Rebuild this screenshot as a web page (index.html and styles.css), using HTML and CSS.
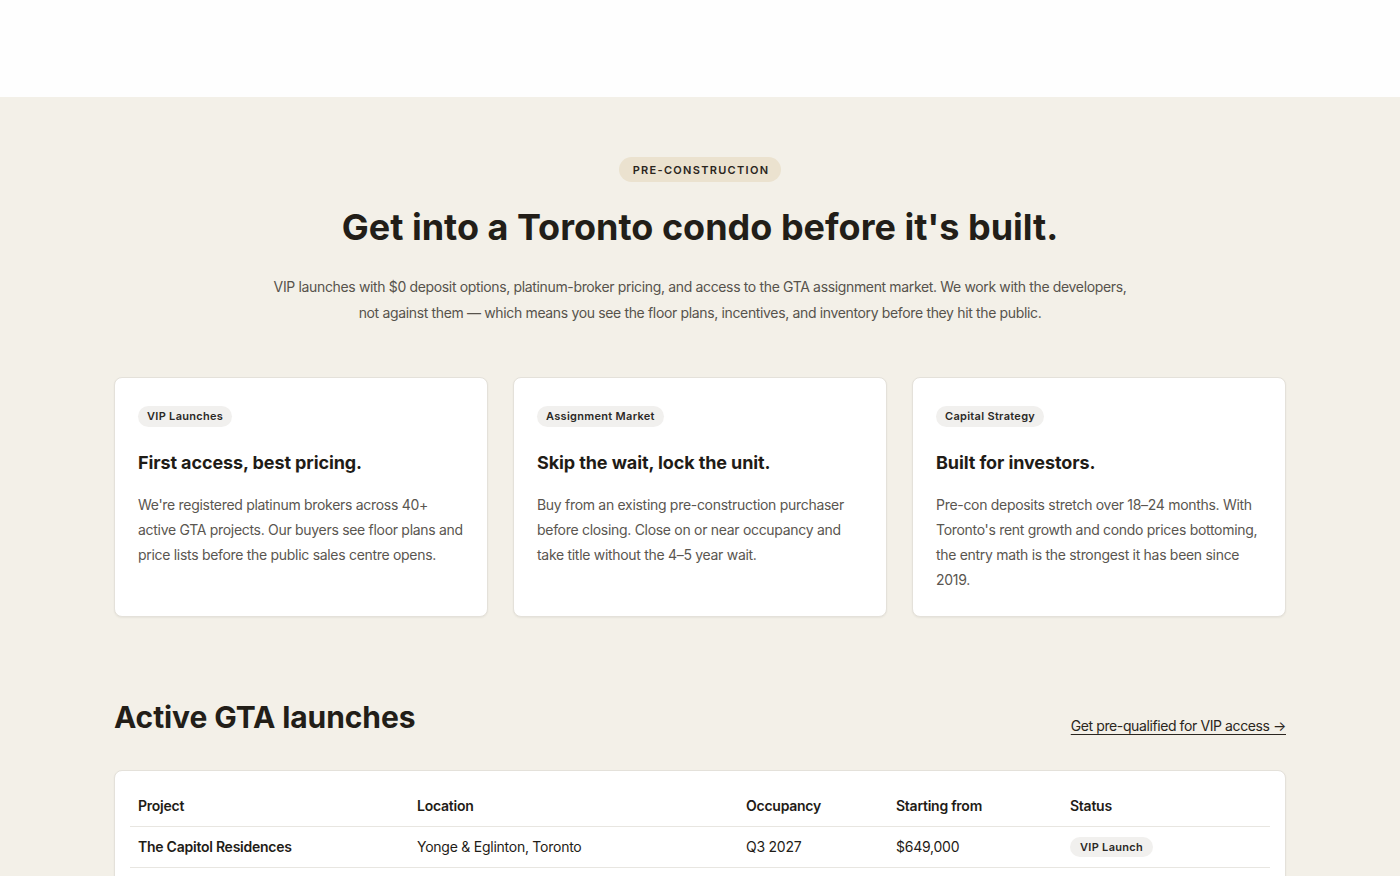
FILE: index.html
```html
<!DOCTYPE html>
<html lang="en">
<head>
<meta charset="utf-8">
<title>Pre-construction condos in Toronto</title>
<link rel="stylesheet" href="styles.css">
</head>
<body>
<header class="site-header"></header>

<main class="section">
  <div class="container">
    <div class="intro">
      <span class="eyebrow">PRE-CONSTRUCTION</span>
      <h1 class="hero-title">Get into a Toronto condo before it's built.</h1>
      <p class="hero-lead">VIP launches with $0 deposit options, platinum-broker pricing, and access to the GTA assignment market. We work with the developers, not against them — which means you see the floor plans, incentives, and inventory before they hit the public.</p>
    </div>

    <div class="cards">
      <article class="card">
        <span class="tag">VIP Launches</span>
        <h3 class="card-title">First access, best pricing.</h3>
        <p class="card-text">We're registered platinum brokers across 40+ active GTA projects. Our buyers see floor plans and price lists before the public sales centre opens.</p>
      </article>
      <article class="card">
        <span class="tag">Assignment Market</span>
        <h3 class="card-title">Skip the wait, lock the unit.</h3>
        <p class="card-text">Buy from an existing pre-construction purchaser before closing. Close on or near occupancy and take title without the 4–5 year wait.</p>
      </article>
      <article class="card">
        <span class="tag">Capital Strategy</span>
        <h3 class="card-title">Built for investors.</h3>
        <p class="card-text">Pre-con deposits stretch over 18–24 months. With Toronto's rent growth and condo prices bottoming, the entry math is the strongest it has been since 2019.</p>
      </article>
    </div>

    <div class="launches-head">
      <h2 class="section-title">Active GTA launches</h2>
      <a class="text-link" href="#">Get pre-qualified for VIP access →</a>
    </div>

    <div class="table-card">
      <table class="launches">
        <thead>
          <tr>
            <th class="col-project">Project</th>
            <th class="col-location">Location</th>
            <th class="col-occ">Occupancy</th>
            <th class="col-price">Starting from</th>
            <th class="col-status">Status</th>
          </tr>
        </thead>
        <tbody>
          <tr>
            <td class="project-name">The Capitol Residences</td>
            <td>Yonge &amp; Eglinton, Toronto</td>
            <td>Q3 2027</td>
            <td>$649,000</td>
            <td><span class="status">VIP Launch</span></td>
          </tr>
          <tr>
            <td class="project-name">Lakeshore Towers</td>
            <td>Etobicoke, Toronto</td>
            <td>Q1 2028</td>
            <td>$579,000</td>
            <td><span class="status">Now Selling</span></td>
          </tr>
        </tbody>
      </table>
    </div>
  </div>
</main>
</body>
</html>
```

FILE: styles.css
```css
* {
  box-sizing: border-box;
}

html, body {
  margin: 0;
  padding: 0;
}

body {
  font-family: Inter, "Liberation Sans", sans-serif;
  color: #1f1c17;
  background: #f3f0e8;
}

.site-header {
  height: 97px;
  background: #fefefe;
}

.section {
  padding: 60px 0 80px;
}

.container {
  width: 1172px;
  margin: 0 auto;
}

.intro {
  display: flex;
  flex-direction: column;
  align-items: center;
  text-align: center;
}

.eyebrow {
  display: inline-block;
  padding: 6px 12px 5px 14px;
  border-radius: 999px;
  background: #ebe2cf;
  color: #2a251d;
  font-size: 11px;
  font-weight: 600;
  letter-spacing: 1.3px;
  line-height: 14px;
}

.hero-title {
  margin: 22px 0 0;
  font-size: 36px;
  font-weight: 700;
  letter-spacing: 0;
  line-height: 46px;
  color: #221e18;
}

.hero-lead {
  margin: 24px 0 0;
  max-width: 860px;
  font-size: 14px;
  letter-spacing: -0.35px;
  line-height: 25.5px;
  color: #57534c;
}

.cards {
  display: grid;
  grid-template-columns: repeat(3, 1fr);
  gap: 25px;
  margin-top: 52px;
}

.card {
  background: #ffffff;
  border: 1px solid #e4e1da;
  border-radius: 8px;
  box-shadow: 0 1px 2px rgba(40, 32, 20, 0.06);
  padding: 26px 23px 24px;
  min-height: 238px;
}

.tag {
  display: inline-block;
  padding: 3px 9px;
  border-radius: 999px;
  background: #f1f0ee;
  color: #2b2926;
  font-size: 11px;
  font-weight: 600;
  letter-spacing: 0.3px;
  line-height: 15px;
}

.card-title {
  margin: 23px 0 0;
  font-size: 18px;
  font-weight: 700;
  letter-spacing: -0.1px;
  line-height: 26px;
  color: #1f1c17;
}

.card-text {
  margin: 16px 0 0;
  font-size: 14px;
  letter-spacing: -0.3px;
  line-height: 25px;
  color: #5a5650;
}

.launches-head {
  display: flex;
  justify-content: space-between;
  align-items: flex-end;
  margin-top: 80px;
}

.section-title {
  margin: 0;
  font-size: 30px;
  font-weight: 700;
  letter-spacing: -0.1px;
  line-height: 40px;
  color: #221e18;
}

.text-link {
  color: #2a2620;
  font-size: 14px;
  letter-spacing: -0.4px;
  line-height: 20px;
  text-decoration: underline;
  text-underline-offset: 3px;
  margin-bottom: 1px;
}

.table-card {
  margin-top: 33px;
  background: #ffffff;
  border: 1px solid #e4e1da;
  border-radius: 8px;
  box-shadow: 0 1px 2px rgba(40, 32, 20, 0.06);
  padding: 15px 15px 20px;
}

.launches {
  width: 100%;
  border-collapse: collapse;
  table-layout: fixed;
  font-size: 14px;
  letter-spacing: -0.25px;
}

.launches th,
.launches td {
  text-align: left;
  vertical-align: middle;
  padding: 10px 8px;
  line-height: 20px;
  border-bottom: 1px solid #e8e6e1;
  color: #1f1c17;
}

.launches th {
  font-weight: 600;
}

.col-project { width: 279px; }
.col-location { width: 329px; }
.col-occ { width: 150px; }
.col-price { width: 174px; }
.col-status { width: 208px; }

.project-name {
  font-weight: 600;
}

.status {
  display: inline-block;
  vertical-align: top;
  padding: 3px 10px;
  border-radius: 999px;
  background: #f1f0ee;
  color: #2b2926;
  font-size: 11px;
  font-weight: 600;
  letter-spacing: 0.3px;
  line-height: 14px;
}
```
